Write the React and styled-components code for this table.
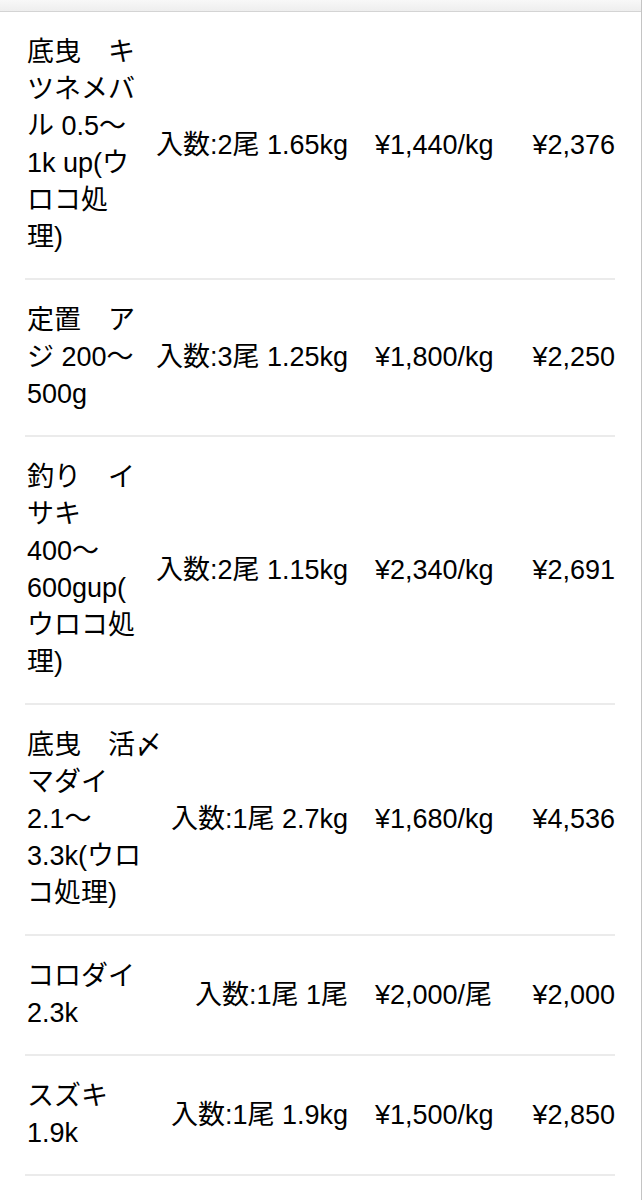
import React from "react";
import styled, { createGlobalStyle } from "styled-components";

const GlobalStyle = createGlobalStyle`
  body {
    margin: 0;
    background: #ffffff;
    font-family: "Liberation Sans", "Noto Sans CJK JP", sans-serif;
    color: #000000;
  }
`;

const Page = styled.div`
  width: 642px;
  min-height: 1200px;
  box-sizing: border-box;
  border-right: 1px solid #c4c4c4;
  background: #ffffff;
`;

const TopBar = styled.div`
  height: 11px;
  background: linear-gradient(#f8f8f8, #eeeeee);
  border-bottom: 1px solid #d4d4d4;
`;

const List = styled.div`
  padding: 0 26px 0 25px;
`;

const Row = styled.div`
  display: flex;
  align-items: center;
  padding: 22px 0 22px 2px;
  border-bottom: 2px solid #ebebeb;
  font-size: 27px;
  line-height: 37px;
`;

const Name = styled.div`
  display: flex;
  flex-direction: column;
  flex: 0 0 auto;
`;

const NameLine = styled.span`
  white-space: nowrap;
`;

const Qty = styled.div`
  flex: 1;
  text-align: right;
  white-space: nowrap;
`;

const Unit = styled.div`
  width: 126px;
  margin-left: 27px;
  white-space: nowrap;
`;

const Total = styled.div`
  width: 90px;
  margin-left: 24px;
  text-align: right;
  white-space: nowrap;
`;

const items = [
  {
    name: ["底曳　キ", "ツネメバ", "ル 0.5～", "1k up(ウ", "ロコ処", "理)"],
    qty: "入数:2尾 1.65kg",
    unit: "¥1,440/kg",
    total: "¥2,376",
  },
  {
    name: ["定置　ア", "ジ 200～", "500g"],
    qty: "入数:3尾 1.25kg",
    unit: "¥1,800/kg",
    total: "¥2,250",
  },
  {
    name: ["釣り　イ", "サキ", "400～", "600gup(", "ウロコ処", "理)"],
    qty: "入数:2尾 1.15kg",
    unit: "¥2,340/kg",
    total: "¥2,691",
  },
  {
    name: ["底曳　活〆", "マダイ", "2.1～", "3.3k(ウロ", "コ処理)"],
    qty: "入数:1尾 2.7kg",
    unit: "¥1,680/kg",
    total: "¥4,536",
  },
  {
    name: ["コロダイ", "2.3k"],
    qty: "入数:1尾 1尾",
    unit: "¥2,000/尾",
    total: "¥2,000",
  },
  {
    name: ["スズキ", "1.9k"],
    qty: "入数:1尾 1.9kg",
    unit: "¥1,500/kg",
    total: "¥2,850",
  },
];

const App = () => {
  return (
    <>
      <GlobalStyle />
      <Page>
        <TopBar />
        <List>
          {items.map((item, i) => (
            <Row key={i}>
              <Name>
                {item.name.map((line, j) => (
                  <NameLine key={j}>{line}</NameLine>
                ))}
              </Name>
              <Qty>{item.qty}</Qty>
              <Unit>{item.unit}</Unit>
              <Total>{item.total}</Total>
            </Row>
          ))}
        </List>
      </Page>
    </>
  );
};

export default App;
